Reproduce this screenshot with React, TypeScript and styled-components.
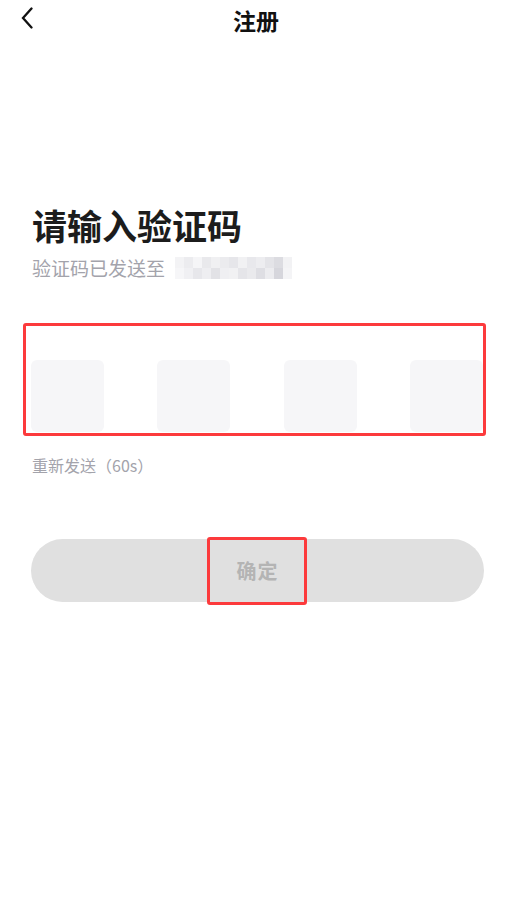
import React from "react";
import styled, { createGlobalStyle } from "styled-components";

const Global = createGlobalStyle`
  html, body { margin: 0; padding: 0; background: #ffffff; }
  body { font-family: "Noto Sans CJK SC", "Noto Sans", sans-serif; color: #1a1a1a; }
`;

const Page = styled.div`
  width: 512px;
  height: 900px;
  background: #fff;
  display: flex;
  flex-direction: column;
`;

const Header = styled.header`
  height: 44px;
  position: relative;
  display: flex;
  align-items: center;
  justify-content: center;
`;

const BackButton = styled.button`
  position: absolute;
  left: 15px;
  top: 4px;
  width: 24px;
  height: 28px;
  padding: 0;
  border: none;
  background: none;
  display: flex;
  align-items: center;
  justify-content: center;
`;

const Title = styled.h1`
  margin: 0;
  font-size: 23px;
  font-weight: 700;
  color: #111;
  line-height: 44px;
  transform: translateY(-2px);
`;

const Content = styled.main`
  padding: 156px 28px 0 31px;
  display: flex;
  flex-direction: column;
`;

const Heading = styled.h2`
  margin: 0 0 0 1px;
  font-size: 35px;
  font-weight: 700;
  line-height: 50px;
  color: #1c1c1c;
`;

const SubLine = styled.div`
  margin: 5px 0 0 1px;
  display: flex;
  align-items: center;
  gap: 10px;
  font-size: 19px;
  line-height: 26px;
  color: #a3a3ab;
`;

const CodeRow = styled.div`
  position: relative;
  margin-top: 79px;
  width: 452px;
  display: flex;
  justify-content: space-between;
`;

const CodeCell = styled.div`
  width: 73px;
  height: 72px;
  border-radius: 6px;
  background: #f6f6f8;
`;

const Highlight = styled.div<{ $top: number; $left: number; $width: number; $height: number }>`
  position: absolute;
  top: ${(p) => p.$top}px;
  left: ${(p) => p.$left}px;
  width: ${(p) => p.$width}px;
  height: ${(p) => p.$height}px;
  box-sizing: border-box;
  border: 3px solid #fc3a3c;
  border-radius: 3px;
  pointer-events: none;
`;

const Resend = styled.div`
  margin: 22px 0 0 1px;
  font-size: 16px;
  line-height: 22px;
  color: #a3a3ab;
`;

const Confirm = styled.button`
  position: relative;
  margin-top: 63px;
  width: 453px;
  height: 63px;
  border: none;
  border-radius: 32px;
  background: #e0e0e0;
  color: #b4b4b4;
  font-family: "Noto Sans CJK SC", "Noto Sans", sans-serif;
  font-size: 20px;
  font-weight: 700;
  letter-spacing: 1px;
  padding: 0;
`;

const Mosaic = () => {
  const cols = [
    "#f3f3f5", "#ececef", "#f5f5f7", "#e9e9ec", "#f0f0f2", "#ebebee", "#e6e6ea",
    "#f1f1f3", "#e8e8ec", "#ededf0", "#e4e4e8", "#dcdce1", "#f2f2f4",
  ];
  const rows2 = [
    "#f6f6f8", "#f0f0f3", "#e7e7eb", "#eeeef1", "#e2e2e6", "#efeff2", "#f1f1f3",
    "#e5e5e9", "#eaeaed", "#dedee3", "#ececef", "#d6d6dc", "#f4f4f6",
  ];
  return (
    <svg width="118" height="22" viewBox="0 0 118 22" aria-hidden>
      {cols.map((c, i) => (
        <rect key={"a" + i} x={i * 9} y={0} width={9} height={11} fill={c} />
      ))}
      {rows2.map((c, i) => (
        <rect key={"b" + i} x={i * 9} y={11} width={9} height={11} fill={c} />
      ))}
    </svg>
  );
};

export default function App() {
  return (
    <Page>
      <Global />
      <Header>
        <BackButton aria-label="返回">
          <svg width="16" height="22" viewBox="0 0 16 22">
            <path d="M12.5 1.5 L4 11 L12.5 20.5" fill="none" stroke="#111" strokeWidth="2.3" strokeLinecap="round" strokeLinejoin="miter" />
          </svg>
        </BackButton>
        <Title>注册</Title>
      </Header>
      <Content>
        <Heading>请输入验证码</Heading>
        <SubLine>
          <span>验证码已发送至</span>
          <Mosaic />
        </SubLine>
        <CodeRow>
          <CodeCell />
          <CodeCell />
          <CodeCell />
          <CodeCell />
          <Highlight $top={-37} $left={-8} $width={463} $height={113} />
        </CodeRow>
        <Resend>重新发送（60s）</Resend>
        <Confirm>
          确定
          <Highlight $top={-2} $left={176} $width={100} $height={68} />
        </Confirm>
      </Content>
    </Page>
  );
}
